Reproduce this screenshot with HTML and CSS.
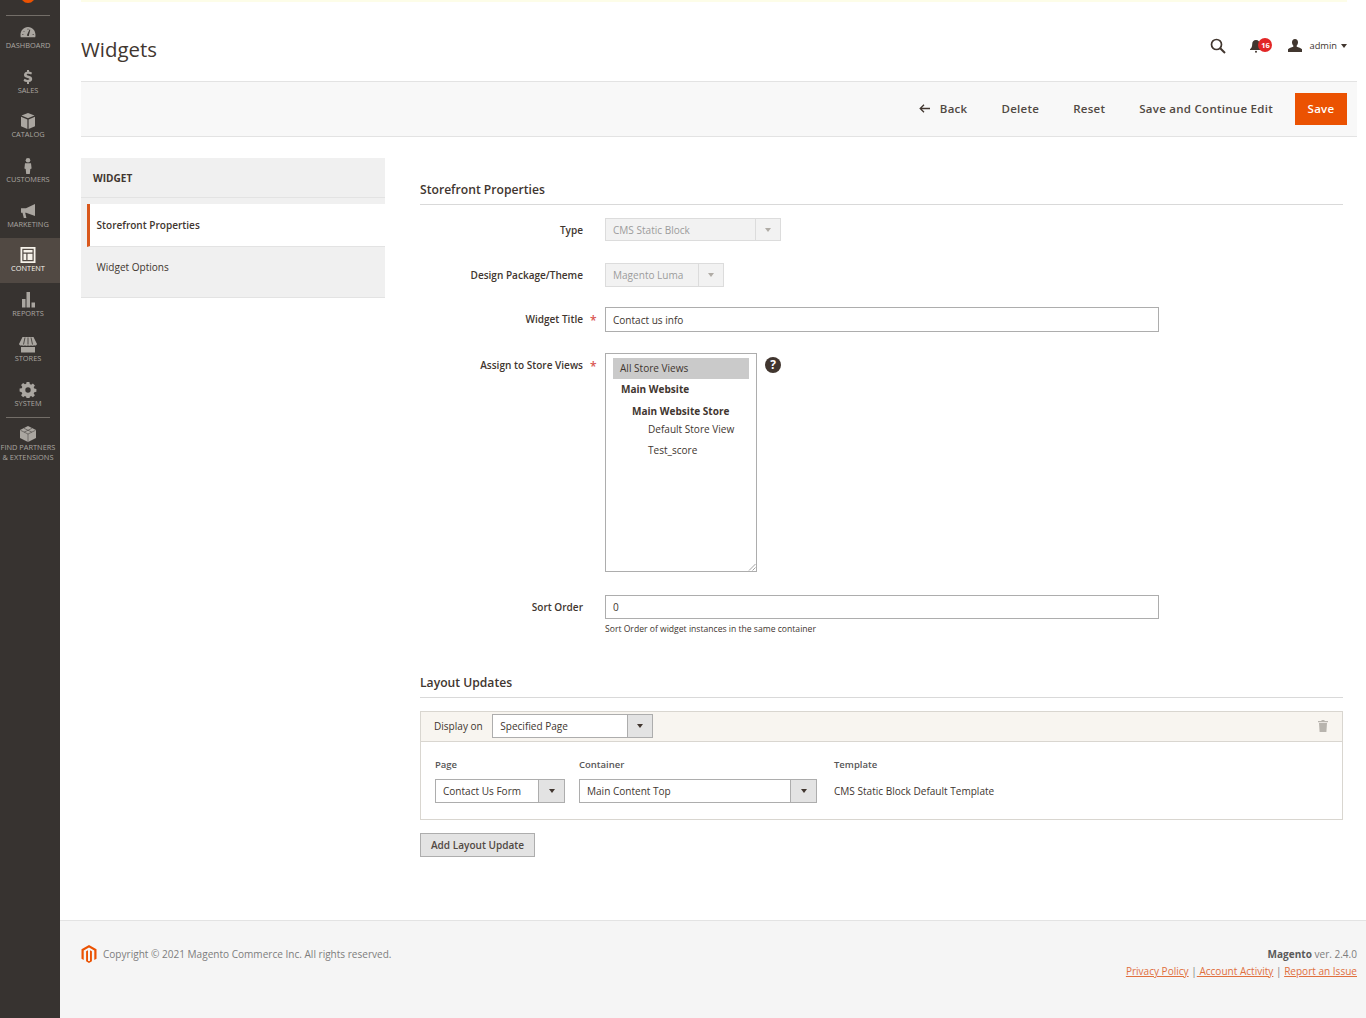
FILE: index.html
```html
<!DOCTYPE html>
<html lang="en">
<head>
  <meta charset="UTF-8" />
  <title>Widgets / Magento Admin</title>
  <link rel="stylesheet" href="styles.css">
</head>
<body>
<div class="page">
  <!-- Left menu -->
  <nav class="nav">
    <div class="nav-logo">
      <svg width="16" height="3" viewBox="0 0 16 3"><path d="M2 0h12l-3 2.400-3 .6-3-.6z" fill="#eb5202"/></svg>
    </div>
    <a class="nav-item">
      <svg class="nav-icon" viewBox="0 0 20 16"><path d="M10 3C5.500 3 2.500 6.700 2.500 11c0 .8.1 1.500.3 2.200h14.400c.2-.7.3-1.400.3-2.200C17.500 6.700 14.500 3 10 3zM9.300 10.300l2.200-4.800.8.3-1.300 5a1 1 0 1 1-1.700-.5z" fill="#aaa6a0" fill-rule="evenodd"/><path d="M5.500 7l1 1M10 4.500V6M4 10.500h1.500M14.500 10.500H16" stroke="#373330" stroke-width=".6"/></svg>
      <span>DASHBOARD</span>
    </a>
    <a class="nav-item">
      <svg class="nav-icon" viewBox="0 0 20 16"><path d="M9 1h2v1.500c1.300.2 2.300.6 3.100 1.200l-.9 1.900c-.9-.6-1.900-.9-3-.9-1 0-1.500.4-1.500.9 0 .6.700.9 2 1.200 2.100.5 3.500 1.200 3.500 3.100 0 1.700-1.200 2.700-3.200 3V15H9v-1.900c-1.500-.2-2.700-.7-3.500-1.400l1-1.900c1 .7 2.100 1.200 3.300 1.200 1 0 1.600-.3 1.600-.9 0-.6-.6-.9-1.900-1.200C7.500 8.400 6 7.700 6 5.900c0-1.700 1.200-2.800 3-3.100z" fill="#aaa6a0"/></svg>
      <span>SALES</span>
    </a>
    <a class="nav-item">
      <svg class="nav-icon" viewBox="0 0 20 16"><path d="M10 0l6.500 2.600L10 5.300 3.500 2.600zM3 3.800l6.400 2.700V16L3 13.200zM17 3.800v9.400L10.600 16V6.500z" fill="#aaa6a0"/></svg>
      <span>CATALOG</span>
    </a>
    <a class="nav-item">
      <svg class="nav-icon" viewBox="0 0 20 16"><circle cx="10" cy="2.300" r="2.300" fill="#aaa6a0"/><path d="M7 5.200h6l.6 5.300-1.300.4-.5 5.100h-3.600l-.5-5.100-1.300-.4z" fill="#aaa6a0"/></svg>
      <span>CUSTOMERS</span>
    </a>
    <a class="nav-item">
      <svg class="nav-icon" viewBox="0 0 20 16"><path d="M17 1v12L8 9.800H7.200L8.400 15H5.800L4.500 9.800H3V5.200h5z" fill="#aaa6a0"/></svg>
      <span>MARKETING</span>
    </a>
    <a class="nav-item nav-item-active">
      <svg class="nav-icon" viewBox="0 0 20 16"><path d="M2.500 0h15v16h-15zM4.300 1.800v12.400h11.400V1.800zM5.500 3h9v2.500h-9zM5.500 6.700h2.800V13H5.500zM9.500 6.700h5V13h-5z" fill="#f7f3eb" fill-rule="evenodd"/></svg>
      <span>CONTENT</span>
    </a>
    <a class="nav-item">
      <svg class="nav-icon" viewBox="0 0 20 16"><path d="M4 7h3.500v8.500H4zM8.500 0H12v15.500H8.500zM13.500 10.500H17v5h-3.500z" fill="#aaa6a0"/></svg>
      <span>REPORTS</span>
    </a>
    <a class="nav-item">
      <svg class="nav-icon" viewBox="0 0 20 16"><path d="M4.500 0h11L19 7a2 2 0 0 1-3 1.300 2.500 2.500 0 0 1-3 0 2.500 2.500 0 0 1-3 0 2.500 2.500 0 0 1-3 0 2.500 2.500 0 0 1-3 0A2 2 0 0 1 1 7zM3 10h14v5.500H3z" fill="#aaa6a0"/><path d="M7 .5L5.500 7.500M10 .5v7M13 .5l1.500 7" stroke="#373330" stroke-width=".8"/></svg>
      <span>STORES</span>
    </a>
    <a class="nav-item">
      <svg class="nav-icon" viewBox="0 0 20 16"><path d="M8.600 0h2.800l.4 2.100 1.300.6 1.800-1.200 2 2-1.200 1.800.6 1.300 2.100.4v2.800l-2.100.4-.6 1.300 1.200 1.800-2 2-1.800-1.200-1.300.6-.4 2.100H8.600l-.4-2.100-1.300-.6-1.800 1.200-2-2 1.200-1.800-.6-1.300L1.600 9.400V6.600l2.100-.4.6-1.300-1.200-1.800 2-2 1.800 1.200 1.300-.6zM10 5.300a2.700 2.700 0 1 0 0 5.400 2.700 2.700 0 0 0 0-5.400z" fill="#aaa6a0" fill-rule="evenodd"/></svg>
      <span>SYSTEM</span>
    </a>
    <div class="nav-rule"></div>
    <a class="nav-item nav-item-last">
      <svg class="nav-icon" viewBox="0 0 20 16"><path d="M10 0l8 4v8l-8 4-8-4V4z" fill="#aaa6a0"/><path d="M2.500 4.300l7.500 3.700 7.500-3.700M10 8v8M6 2.300l7.800 3.800M14 2.300L6.200 6.100" stroke="#373330" stroke-width=".5" fill="none"/></svg>
      <span>FIND PARTNERS<br>&amp; EXTENSIONS</span>
    </a>
  </nav>

  <div class="main">
    <div class="notice-line"></div>

    <header class="head">
      <h1 class="title">Widgets</h1>
      <div class="head-actions">
        <svg class="search-icon" width="16" height="16" viewBox="0 0 16 16"><circle cx="6.500" cy="6.500" r="5" fill="none" stroke="#41362f" stroke-width="1.700"/><path d="M10.200 10.200L15 15" stroke="#41362f" stroke-width="2"/></svg>
        <div class="bell">
          <svg width="12" height="14" viewBox="0 0 12 14"><path d="M6 1c2.500 0 3.800 1.800 3.800 4.300 0 2.300.7 3.700 2.200 5V11H0v-.7c1.500-1.300 2.200-2.700 2.200-5C2.200 2.800 3.500 1 6 1z" fill="#41362f"/><circle cx="6" cy="12.800" r="1" fill="#41362f"/></svg>
          <span class="bell-count">16</span>
        </div>
        <div class="user">
          <svg width="14" height="13" viewBox="0 0 14 13"><path d="M7 0c1.900 0 3 1.400 3 3.200 0 1.300-.5 2.600-1.300 3.300v1.200c1.900.6 4.300 1.300 5.300 2.600V13H0v-2.700c1-1.300 3.400-2 5.300-2.600V6.500C4.500 5.800 4 4.500 4 3.200 4 1.400 5.100 0 7 0z" fill="#41362f"/></svg>
          <span class="user-name">admin</span>
          <i class="caret caret-dark"></i>
        </div>
      </div>
    </header>

    <div class="toolbar">
      <button class="tool-btn tool-back">
        <svg width="11" height="9" viewBox="0 0 11 9"><path d="M11 4.500H1.500M5 .7L1.200 4.500 5 8.300" fill="none" stroke="#41362f" stroke-width="1.300"/></svg>
        Back
      </button>
      <button class="tool-btn">Delete</button>
      <button class="tool-btn">Reset</button>
      <button class="tool-btn">Save and Continue Edit</button>
      <button class="save-btn">Save</button>
    </div>

    <div class="content">
      <aside class="tabs">
        <div class="tabs-title">WIDGET</div>
        <div class="tab tab-active">Storefront Properties</div>
        <div class="tab tab-last">Widget Options</div>
      </aside>

      <section class="form">
        <h2 class="section-title">Storefront Properties</h2>

        <div class="row row-type">
          <label class="row-label">Type</label>
          <div class="select select-off select-type"><span class="select-text">CMS Static Block</span><span class="select-arrow"><i class="caret"></i></span></div>
        </div>
        <div class="row row-theme">
          <label class="row-label">Design Package/Theme</label>
          <div class="select select-off select-theme"><span class="select-text">Magento Luma</span><span class="select-arrow"><i class="caret"></i></span></div>
        </div>
        <div class="row row-title">
          <label class="row-label row-required">Widget Title</label>
          <div class="input input-title">Contact us info</div>
        </div>
        <div class="row row-views">
          <label class="row-label row-required">Assign to Store Views</label>
          <div class="multi">
            <div class="opt opt-selected">All Store Views</div>
            <div class="opt opt-site">Main Website</div>
            <div class="opt opt-store">Main Website Store</div>
            <div class="opt opt-view">Default Store View</div>
            <div class="opt opt-view opt-view-next">Test_score</div>
            <svg class="resize" width="8" height="8" viewBox="0 0 8 8"><path d="M7.500 1L1 7.500M7.500 4.500L4.500 7.500" stroke="#8a8a8a" stroke-width=".8"/></svg>
          </div>
          <span class="help">?</span>
        </div>
        <div class="row row-sort">
          <label class="row-label">Sort Order</label>
          <div class="sort-field">
            <div class="input input-sort">0</div>
            <div class="note">Sort Order of widget instances in the same container</div>
          </div>
        </div>

        <h2 class="section-title section-layout">Layout Updates</h2>

        <div class="panel">
          <div class="panel-head">
            <span class="display-label">Display on</span>
            <div class="select select-display"><span class="select-text">Specified Page</span><span class="select-arrow"><i class="caret caret-dark"></i></span></div>
            <svg class="trash" width="10" height="12" viewBox="0 0 10 12"><path d="M3.500 0h3v1H10v1.200H0V1h3.500zM1 3h8l-.6 9H1.600z" fill="#b8b4ae"/></svg>
          </div>
          <div class="panel-body">
            <div class="col col-page">
              <div class="col-label">Page</div>
              <div class="select select-page"><span class="select-text">Contact Us Form</span><span class="select-arrow"><i class="caret caret-dark"></i></span></div>
            </div>
            <div class="col col-container">
              <div class="col-label">Container</div>
              <div class="select select-container"><span class="select-text">Main Content Top</span><span class="select-arrow"><i class="caret caret-dark"></i></span></div>
            </div>
            <div class="col col-template">
              <div class="col-label">Template</div>
              <div class="template-text">CMS Static Block Default Template</div>
            </div>
          </div>
        </div>

        <button class="add-btn">Add Layout Update</button>
      </section>
    </div>

    <footer class="footer">
      <div class="copyright">
        <svg width="16" height="18" viewBox="0 0 16 18"><path d="M8 0l7.500 4.300v9.400l-2.200 1.300V5.600L8 2.600 2.700 5.600V15L.5 13.700V4.300zM7 5.200v10.500L8 16.300l1-.6V5.200l1.900 1.100v10L8 18l-2.900-1.700v-10z" fill="#eb5202"/></svg>
        <span>Copyright © 2021 Magento Commerce Inc. All rights reserved.</span>
      </div>
      <div class="legal">
        <div class="version"><b>Magento</b> ver. 2.4.0</div>
        <div class="links"><a>Privacy Policy</a> |<a class="link-spaced"> Account Activity</a> | <a>Report an Issue</a></div>
      </div>
    </footer>
  </div>
</div>
</body>
</html>
```
FILE: styles.css
```css
* { box-sizing: border-box; margin: 0; padding: 0; }
body {
  background: #fff;
  font-family: 'Open Sans', sans-serif;
  font-size: 10.050px;
  color: #41362f;
}
.page { display: flex; min-height: 1018px; height: 1018px; overflow: hidden; }

/* left menu */
.nav { width: 60px; flex: none; background: #373330; display: flex; flex-direction: column; align-items: stretch; }
.nav-logo { height: 16px; margin: 0 10px -1px 6px; border-bottom: 1px solid #736e68; display: flex; justify-content: center; }
.nav-item { height: 44.700px; padding: 9px 4px 0 0; display: flex; flex-direction: column; align-items: center; color: #aaa6a0; font-size: 7.400px; line-height: 10px; text-align: center; white-space: nowrap; }
.nav-icon { width: 20px; height: 16px; flex: none; }
.nav-item-active { background: #514943; color: #f7f3eb; }
.nav-rule { height: 1px; background: #736e68; margin: 0 10px 0 6px; }
.nav-item-last { padding-top: 8px; height: 60px; }

.main { flex: 1; min-width: 0; display: flex; flex-direction: column; }
.notice-line { height: 2px; background: #fdfde8; margin: 0 19px 0 21px; }

/* header */
.head { height: 79px; margin: 0 19px 0 21px; display: flex; align-items: center; justify-content: space-between; padding-top: 16px; }
.title { font-size: 20.400px; font-weight: 400; color: #41362f; margin-top: -2px; }
.head-actions { display: flex; align-items: center; margin-top: -8px; }
.search-icon { margin-right: 24px; }
.bell { display: flex; align-items: center; width: 38px; position: relative; }
.bell-count { position: absolute; left: 8px; top: -1px; width: 14px; height: 14px; border-radius: 50%; background: #e22626; color: #fff; font-size: 7.500px; font-weight: 700; line-height: 14px; text-align: center; }
.user { display: flex; align-items: center; }
.user-name { font-size: 9.300px; margin: 0 4px 0 7px; }

.caret { display: inline-block; width: 0; height: 0; border-left: 3px solid transparent; border-right: 3px solid transparent; border-top: 4px solid #b0aca6; }
.caret-dark { border-top-color: #41362f; }

/* toolbar */
.toolbar { height: 56px; margin: 0 9px 0 21px; background: #f8f8f8; border-top: 1px solid #e3e3e3; border-bottom: 1px solid #e3e3e3; display: flex; align-items: center; justify-content: flex-end; padding-right: 10px; }
.tool-btn { border: 0; background: none; font: 600 11.500px 'Open Sans', sans-serif; letter-spacing: .27px; color: #514943; margin: 0 34px 2px 0; display: flex; align-items: center; }
.tool-back svg { margin-right: 10px; }
.tool-btn:nth-last-child(2) { margin-right: 22px; }
.save-btn { width: 52px; height: 32px; margin-bottom: 1px; border: 0; background: #eb5202; color: #fff; font: 600 11.500px 'Open Sans', sans-serif; letter-spacing: .27px; }

/* main columns */
.content { flex: 1; margin: 21px 23px 0 21px; display: flex; gap: 35px; }
.tabs { width: 304px; flex: none; align-self: flex-start; background: #f0f0f0; border-bottom: 1px solid #e3e3e3; }
.tabs-title { height: 40px; padding: 0 12px; border-bottom: 1px solid #e3e3e3; font-weight: 700; color: #41362f; line-height: 40px; }
.tab { margin-left: 6px; padding-left: 9.500px; color: #41362f; }
.tab-active { height: 43px; margin-top: 6px; background: #fff; border-left: 3px solid #d9581c; border-bottom: 1px solid #e3e3e3; padding-left: 6.500px; font-weight: 600; line-height: 43px; }
.tab-last { height: 50px; line-height: 41px; }

.form { flex: 1; min-width: 0; }
.section-title { font-size: 12.150px; font-weight: 600; color: #41362f; height: 47px; padding-top: 24px; border-bottom: 1px solid #d9d9d9; line-height: 16px; }
.section-layout { margin-top: 40px; height: 23px; padding-top: 0; }

.row { display: flex; align-items: flex-start; }
.row-label { width: 163px; flex: none; margin-right: 22px; text-align: right; font-weight: 600; line-height: 24px; position: relative; }
.row-required::after { content: '*'; position: absolute; left: 170px; top: 2px; color: #d9534f; font-size: 12px; }
.row-type { margin-top: 13px; }
.row-theme { margin-top: 21px; }
.row-title { margin-top: 20px; }
.row-views { margin-top: 21px; }
.row-sort { margin-top: 23px; }

.select { display: flex; height: 24px; border: 1px solid #adadad; background: #fff; line-height: 22px; color: #41362f; }
.select-text { flex: 1; padding-left: 7px; white-space: nowrap; }
.select-arrow { width: 25px; flex: none; background: #e3e3e3; border-left: 1px solid #adadad; display: flex; align-items: center; justify-content: center; }
.select-off { background: #f2f2f2; border-color: #dcdcdc; color: #9c9c9c; }
.select-off .select-arrow { background: #f2f2f2; border-left-color: #dcdcdc; }
.select-type { width: 176px; height: 23px; }
.select-theme { width: 119px; }
.input { height: 25px; border: 1px solid #adadad; background: #fff; padding-left: 7px; line-height: 25px; color: #41362f; }
.input-title { width: 554px; }
.input-sort { width: 554px; height: 24px; line-height: 22px; }

.multi { width: 152px; height: 219px; border: 1px solid #adadad; padding: 4px 7px; position: relative; line-height: 21px; }
.opt { white-space: nowrap; }
.opt-selected { background: #cacaca; padding-left: 7px; line-height: 21px; }
.opt-site { font-weight: 700; padding-left: 8px; }
.opt-store { font-weight: 700; padding-left: 19px; line-height: 22px; }
.opt-view { padding-left: 35px; line-height: 15px; }
.opt-view-next { margin-top: 6px; }
.resize { position: absolute; right: 0; bottom: 0; }
.help { width: 16px; height: 16px; margin: 4px 0 0 8px; border-radius: 50%; background: #41362f; color: #fff; font-size: 12px; font-weight: 700; line-height: 16px; text-align: center; }
.note { font-size: 8.600px; line-height: 12px; margin-top: 4px; }

/* layout update panel */
.panel { margin-top: 13px; height: 109px; border: 1px solid #d9d6d0; }
.panel-head { height: 30px; background: #f8f5f0; border-bottom: 1px solid #d9d6d0; display: flex; align-items: center; padding: 0 14px 2px 13px; }
.display-label { margin-right: 9px; }
.select-display { width: 161px; }
.select-display .select-arrow { width: 24.500px; }
.select-display .select-text { padding-left: 7.500px; }
.trash { margin-left: auto; }
.panel-body { display: flex; padding: 17px 0 0 14px; }
.col-label { font-size: 9.500px; font-weight: 600; color: #575757; line-height: 12px; margin-bottom: 8px; }
.col-page { width: 144px; }
.col-container { width: 255px; }
.select-page { width: 130px; }
.select-page .select-arrow { width: 26px; }
.select-container { width: 238px; }
.select-container .select-arrow { width: 26px; }
.template-text { line-height: 24px; }
.add-btn { display: block; margin-top: 13px; width: 115px; height: 24px; background: #e3e3e3; border: 1px solid #adadad; font: 600 10.050px 'Open Sans', sans-serif; color: #514943; }

/* footer */
.footer { height: 98px; flex: none; background: #f5f5f5; border-top: 1px solid #e3e3e3; display: flex; justify-content: space-between; padding: 24px 9px 0 21px; }
.copyright { display: flex; align-items: flex-start; color: #7d7d7d; height: 18px; line-height: 18px; }
.copyright svg { margin-right: 6px; }
.legal { text-align: right; color: #7d7d7d; line-height: 17px; margin-top: 1px; }
.version b { color: #5a5a5a; font-weight: 700; }
.links a { color: #e0703e; text-decoration: underline; }
.link-spaced { white-space: pre; }
```
